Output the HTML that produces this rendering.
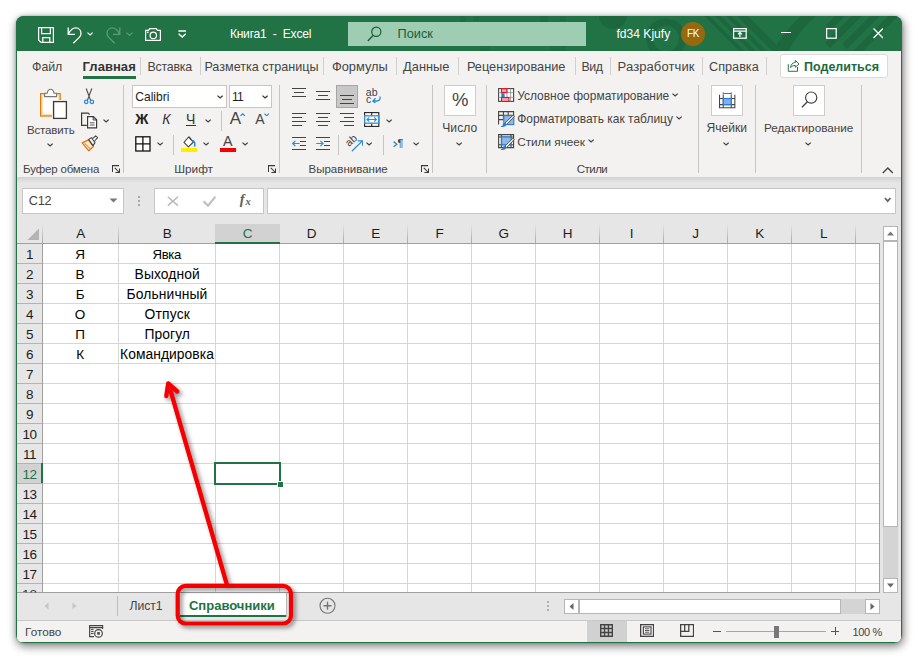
<!DOCTYPE html>
<html lang="ru"><head><meta charset="utf-8"><title>Excel</title>
<style>
html,body{margin:0;padding:0;background:#fff;}
body{width:918px;height:659px;overflow:hidden;position:relative;font-family:"Liberation Sans", sans-serif;}
#shadow{position:absolute;left:16px;top:16px;width:886px;height:627px;border-radius:8px;background:#217346;box-shadow:1px 3px 9px 1px rgba(0,0,0,0.45), 0 0 3px rgba(0,0,0,0.25);}
#win{position:absolute;left:0;top:0;width:918px;height:659px;clip-path:inset(16px 16px 16px 16px round 8px);}
#over{position:absolute;left:0;top:0;width:918px;height:659px;pointer-events:none;}
</style></head><body>
<div id="shadow"></div>
<div id="win">
<div style="position:absolute;left:16px;top:16px;width:886px;height:35px;background:#217346;"></div>
<div style="position:absolute;left:16px;top:51px;width:886px;height:126px;background:#f3f2f1;"></div>
<div style="position:absolute;left:16px;top:177px;width:886px;height:444px;background:#e6e6e6;"></div>
<div style="position:absolute;left:16px;top:177px;width:886px;height:6px;background:linear-gradient(#d2d2d2,#e6e6e6);"></div>
<div style="position:absolute;left:16px;top:621px;width:886px;height:22px;background:#f3f2f1;"></div>
<div style="position:absolute;left:16px;top:620px;width:886px;height:1px;background:#c8c8c8;"></div>
<div style="position:absolute;left:16px;top:51px;width:1px;height:592px;background:#217346;"></div>
<div style="position:absolute;left:901px;top:51px;width:1px;height:592px;background:#217346;"></div>
<div style="position:absolute;left:16px;top:642px;width:886px;height:1px;background:#217346;"></div>
<svg style="position:absolute;left:440px;top:16px;" width="462" height="35" viewBox="0 0 462 35"><g fill="#1d673e" stroke="none"><circle cx="173" cy="-1" r="14"/><path d="M226 22.5m-20 0a20 20 0 1 0 40 0a20 20 0 1 0 -40 0ZM226 22.5m-13 0a13 13 0 1 1 26 0a13 13 0 1 1 -26 0Z" fill-rule="evenodd"/><path d="M264 0L299 35H304.500L269.500 0ZM275 0L310 35H315.500L280.500 0ZM286 0L321 35H326.500L291.500 0ZM297 0L332 35H337.500L302.500 0ZM308 0L336 28V33.500L302.500 0Z"/><path d="M333 35C341 20 352 8 361 0H376C366 9 355 21 349 35Z"/><path d="M395 0L386 9L391 14L405 0ZM412 0L385 27L390 32L422 0ZM430 0L402 28L407 33L440 0ZM448 0L413 35H423L458 0Z"/><path d="M20 0h6v6h-6zM34 0h5v5h-5zM100 0h8v6h-8zM120 0h6v5h-6zM40 30h10v5h-10zM110 30h16v5h-16z" opacity="0.6"/></g></svg>
<div style="position:absolute;left:348px;top:22px;width:238px;height:24px;background:#9fcdb3;"></div>
<div style="position:absolute;left:681px;top:21.5px;width:24px;height:24px;background:#97690f;border-radius:50%;"></div>
<div style="position:absolute;left:83px;top:76px;width:52.5px;height:3px;background:#217346;"></div>
<div style="position:absolute;left:140px;top:57px;width:1px;height:18px;background:#d2d0ce;"></div>
<div style="position:absolute;left:200px;top:57px;width:1px;height:18px;background:#d2d0ce;"></div>
<div style="position:absolute;left:323px;top:57px;width:1px;height:18px;background:#d2d0ce;"></div>
<div style="position:absolute;left:396px;top:57px;width:1px;height:18px;background:#d2d0ce;"></div>
<div style="position:absolute;left:458px;top:57px;width:1px;height:18px;background:#d2d0ce;"></div>
<div style="position:absolute;left:575px;top:57px;width:1px;height:18px;background:#d2d0ce;"></div>
<div style="position:absolute;left:609.5px;top:57px;width:1px;height:18px;background:#d2d0ce;"></div>
<div style="position:absolute;left:702px;top:57px;width:1px;height:18px;background:#d2d0ce;"></div>
<div style="position:absolute;left:766px;top:57px;width:1px;height:18px;background:#d2d0ce;"></div>
<div style="position:absolute;left:780px;top:54px;width:108px;height:23.5px;background:#fff;border:1px solid #dddbd9;box-sizing:border-box;border-radius:3px;"></div>
<div style="position:absolute;left:123px;top:85px;width:1px;height:88px;background:#c8c6c4;"></div>
<div style="position:absolute;left:279px;top:85px;width:1px;height:88px;background:#c8c6c4;"></div>
<div style="position:absolute;left:432px;top:85px;width:1px;height:88px;background:#c8c6c4;"></div>
<div style="position:absolute;left:486px;top:85px;width:1px;height:88px;background:#c8c6c4;"></div>
<div style="position:absolute;left:698px;top:85px;width:1px;height:88px;background:#c8c6c4;"></div>
<div style="position:absolute;left:755px;top:85px;width:1px;height:88px;background:#c8c6c4;"></div>
<div style="position:absolute;left:861px;top:85px;width:1px;height:88px;background:#c8c6c4;"></div>
<div style="position:absolute;left:132px;top:85px;width:95px;height:23px;background:#fff;border:1px solid #c8c6c4;box-sizing:border-box;"></div>
<div style="position:absolute;left:229px;top:85px;width:43px;height:23px;background:#fff;border:1px solid #c8c6c4;box-sizing:border-box;"></div>
<div style="position:absolute;left:186px;top:125px;width:10px;height:1px;background:#333;"></div>
<div style="position:absolute;left:221px;top:110.5px;width:1px;height:20px;background:#c8c6c4;"></div>
<div style="position:absolute;left:173px;top:134.5px;width:1px;height:20px;background:#c8c6c4;"></div>
<div style="position:absolute;left:338px;top:134.5px;width:1px;height:20px;background:#c8c6c4;"></div>
<div style="position:absolute;left:383px;top:134.5px;width:1px;height:20px;background:#c8c6c4;"></div>
<div style="position:absolute;left:336px;top:85px;width:22px;height:23px;background:#c8c8c8;border:1px solid #a6a6a6;box-sizing:border-box;"></div>
<div style="position:absolute;left:444px;top:85px;width:32px;height:31px;background:#fff;border:1px solid #cfcdcb;box-sizing:border-box;"></div>
<div style="position:absolute;left:711px;top:85px;width:32px;height:31px;background:#fff;border:1px solid #cfcdcb;box-sizing:border-box;"></div>
<div style="position:absolute;left:793px;top:85px;width:32px;height:31px;background:#fff;border:1px solid #cfcdcb;box-sizing:border-box;"></div>
<div style="position:absolute;left:22px;top:188px;width:102px;height:26px;background:#fff;border:1px solid #c6c6c6;box-sizing:border-box;"></div>
<div style="position:absolute;left:154px;top:188px;width:110px;height:26px;background:#fff;border:1px solid #c6c6c6;box-sizing:border-box;"></div>
<div style="position:absolute;left:267px;top:188px;width:629px;height:26px;background:#fff;border:1px solid #c6c6c6;box-sizing:border-box;"></div>
<div style="position:absolute;left:138px;top:196px;width:2px;height:2px;background:#a8a8a8;"></div>
<div style="position:absolute;left:138px;top:200px;width:2px;height:2px;background:#a8a8a8;"></div>
<div style="position:absolute;left:138px;top:204px;width:2px;height:2px;background:#a8a8a8;"></div>
<div style="position:absolute;left:43px;top:244px;width:836px;height:348px;background:#fff;"></div>
<div style="position:absolute;left:17px;top:463px;width:25px;height:20px;background:#d2d2d2;"></div>
<div style="position:absolute;left:17px;top:263px;width:25px;height:1px;background:#b4b4b4;"></div>
<div style="position:absolute;left:43px;top:263px;width:836px;height:1px;background:#d6d6d6;"></div>
<div style="position:absolute;left:17px;top:283px;width:25px;height:1px;background:#b4b4b4;"></div>
<div style="position:absolute;left:43px;top:283px;width:836px;height:1px;background:#d6d6d6;"></div>
<div style="position:absolute;left:17px;top:303px;width:25px;height:1px;background:#b4b4b4;"></div>
<div style="position:absolute;left:43px;top:303px;width:836px;height:1px;background:#d6d6d6;"></div>
<div style="position:absolute;left:17px;top:323px;width:25px;height:1px;background:#b4b4b4;"></div>
<div style="position:absolute;left:43px;top:323px;width:836px;height:1px;background:#d6d6d6;"></div>
<div style="position:absolute;left:17px;top:343px;width:25px;height:1px;background:#b4b4b4;"></div>
<div style="position:absolute;left:43px;top:343px;width:836px;height:1px;background:#d6d6d6;"></div>
<div style="position:absolute;left:17px;top:363px;width:25px;height:1px;background:#b4b4b4;"></div>
<div style="position:absolute;left:43px;top:363px;width:836px;height:1px;background:#d6d6d6;"></div>
<div style="position:absolute;left:17px;top:383px;width:25px;height:1px;background:#b4b4b4;"></div>
<div style="position:absolute;left:43px;top:383px;width:836px;height:1px;background:#d6d6d6;"></div>
<div style="position:absolute;left:17px;top:403px;width:25px;height:1px;background:#b4b4b4;"></div>
<div style="position:absolute;left:43px;top:403px;width:836px;height:1px;background:#d6d6d6;"></div>
<div style="position:absolute;left:17px;top:423px;width:25px;height:1px;background:#b4b4b4;"></div>
<div style="position:absolute;left:43px;top:423px;width:836px;height:1px;background:#d6d6d6;"></div>
<div style="position:absolute;left:17px;top:443px;width:25px;height:1px;background:#b4b4b4;"></div>
<div style="position:absolute;left:43px;top:443px;width:836px;height:1px;background:#d6d6d6;"></div>
<div style="position:absolute;left:17px;top:463px;width:25px;height:1px;background:#b4b4b4;"></div>
<div style="position:absolute;left:43px;top:463px;width:836px;height:1px;background:#d6d6d6;"></div>
<div style="position:absolute;left:17px;top:483px;width:25px;height:1px;background:#b4b4b4;"></div>
<div style="position:absolute;left:43px;top:483px;width:836px;height:1px;background:#d6d6d6;"></div>
<div style="position:absolute;left:17px;top:503px;width:25px;height:1px;background:#b4b4b4;"></div>
<div style="position:absolute;left:43px;top:503px;width:836px;height:1px;background:#d6d6d6;"></div>
<div style="position:absolute;left:17px;top:523px;width:25px;height:1px;background:#b4b4b4;"></div>
<div style="position:absolute;left:43px;top:523px;width:836px;height:1px;background:#d6d6d6;"></div>
<div style="position:absolute;left:17px;top:543px;width:25px;height:1px;background:#b4b4b4;"></div>
<div style="position:absolute;left:43px;top:543px;width:836px;height:1px;background:#d6d6d6;"></div>
<div style="position:absolute;left:17px;top:563px;width:25px;height:1px;background:#b4b4b4;"></div>
<div style="position:absolute;left:43px;top:563px;width:836px;height:1px;background:#d6d6d6;"></div>
<div style="position:absolute;left:17px;top:583px;width:25px;height:1px;background:#b4b4b4;"></div>
<div style="position:absolute;left:43px;top:583px;width:836px;height:1px;background:#d6d6d6;"></div>
<div style="position:absolute;left:118px;top:244px;width:1px;height:348px;background:#d6d6d6;"></div>
<div style="position:absolute;left:118px;top:224px;width:1px;height:19px;background:linear-gradient(#e6e6e6,#a8a8a8);"></div>
<div style="position:absolute;left:215px;top:244px;width:1px;height:348px;background:#d6d6d6;"></div>
<div style="position:absolute;left:215px;top:224px;width:1px;height:19px;background:linear-gradient(#e6e6e6,#a8a8a8);"></div>
<div style="position:absolute;left:279px;top:244px;width:1px;height:348px;background:#d6d6d6;"></div>
<div style="position:absolute;left:279px;top:224px;width:1px;height:19px;background:linear-gradient(#e6e6e6,#a8a8a8);"></div>
<div style="position:absolute;left:343px;top:244px;width:1px;height:348px;background:#d6d6d6;"></div>
<div style="position:absolute;left:343px;top:224px;width:1px;height:19px;background:linear-gradient(#e6e6e6,#a8a8a8);"></div>
<div style="position:absolute;left:407px;top:244px;width:1px;height:348px;background:#d6d6d6;"></div>
<div style="position:absolute;left:407px;top:224px;width:1px;height:19px;background:linear-gradient(#e6e6e6,#a8a8a8);"></div>
<div style="position:absolute;left:471px;top:244px;width:1px;height:348px;background:#d6d6d6;"></div>
<div style="position:absolute;left:471px;top:224px;width:1px;height:19px;background:linear-gradient(#e6e6e6,#a8a8a8);"></div>
<div style="position:absolute;left:535px;top:244px;width:1px;height:348px;background:#d6d6d6;"></div>
<div style="position:absolute;left:535px;top:224px;width:1px;height:19px;background:linear-gradient(#e6e6e6,#a8a8a8);"></div>
<div style="position:absolute;left:599px;top:244px;width:1px;height:348px;background:#d6d6d6;"></div>
<div style="position:absolute;left:599px;top:224px;width:1px;height:19px;background:linear-gradient(#e6e6e6,#a8a8a8);"></div>
<div style="position:absolute;left:663px;top:244px;width:1px;height:348px;background:#d6d6d6;"></div>
<div style="position:absolute;left:663px;top:224px;width:1px;height:19px;background:linear-gradient(#e6e6e6,#a8a8a8);"></div>
<div style="position:absolute;left:727px;top:244px;width:1px;height:348px;background:#d6d6d6;"></div>
<div style="position:absolute;left:727px;top:224px;width:1px;height:19px;background:linear-gradient(#e6e6e6,#a8a8a8);"></div>
<div style="position:absolute;left:791px;top:244px;width:1px;height:348px;background:#d6d6d6;"></div>
<div style="position:absolute;left:791px;top:224px;width:1px;height:19px;background:linear-gradient(#e6e6e6,#a8a8a8);"></div>
<div style="position:absolute;left:855px;top:244px;width:1px;height:348px;background:#d6d6d6;"></div>
<div style="position:absolute;left:855px;top:224px;width:1px;height:19px;background:linear-gradient(#e6e6e6,#a8a8a8);"></div>
<div style="position:absolute;left:42px;top:224px;width:1px;height:19px;background:linear-gradient(#e6e6e6,#a8a8a8);"></div>
<div style="position:absolute;left:17px;top:243px;width:863px;height:1px;background:#a0a0a0;"></div>
<div style="position:absolute;left:42px;top:244px;width:1px;height:348px;background:#a0a0a0;"></div>
<div style="position:absolute;left:879px;top:244px;width:1px;height:349px;background:#a0a0a0;"></div>
<div style="position:absolute;left:17px;top:592px;width:863px;height:1px;background:#a0a0a0;"></div>
<div style="position:absolute;left:215px;top:224px;width:65px;height:19px;background:#d2d2d2;"></div>
<div style="position:absolute;left:215px;top:242px;width:65px;height:2px;background:#217346;"></div>
<div style="position:absolute;left:41px;top:463px;width:2px;height:20px;background:#217346;"></div>
<svg style="position:absolute;left:27px;top:228px;" width="13" height="13" viewBox="0 0 13 13"><path d="M12 0.5V12H0.5Z" fill="#b4b4b4"/></svg>
<div style="position:absolute;left:214px;top:462px;width:67px;height:23px;border:2px solid #217346;box-sizing:border-box;"></div>
<div style="position:absolute;left:277px;top:481px;width:7px;height:7px;background:#fff;"></div>
<div style="position:absolute;left:278px;top:482px;width:5px;height:5px;background:#217346;"></div>
<div style="position:absolute;left:883px;top:226px;width:15px;height:367px;background:#d4d4d4;"></div>
<div style="position:absolute;left:883px;top:226px;width:15px;height:15px;background:#fff;border:1px solid #b6b6b6;box-sizing:border-box;"></div>
<div style="position:absolute;left:883px;top:241px;width:15px;height:286px;background:#fff;border:1px solid #b6b6b6;box-sizing:border-box;"></div>
<div style="position:absolute;left:883px;top:578px;width:15px;height:15px;background:#fff;border:1px solid #b6b6b6;box-sizing:border-box;"></div>
<svg style="position:absolute;left:887px;top:231px;" width="7" height="5" viewBox="0 0 7 5"><path d="M3.5 0.5L7 4.5H0Z" fill="#777"/></svg>
<svg style="position:absolute;left:887px;top:583px;" width="7" height="5" viewBox="0 0 7 5"><path d="M3.5 4.5L7 0.5H0Z" fill="#666"/></svg>
<div style="position:absolute;left:564px;top:599px;width:316px;height:15px;background:#d4d4d4;"></div>
<div style="position:absolute;left:564px;top:599px;width:15px;height:15px;background:#fff;border:1px solid #b6b6b6;box-sizing:border-box;"></div>
<div style="position:absolute;left:579px;top:599px;width:262px;height:15px;background:#fff;border:1px solid #b6b6b6;box-sizing:border-box;"></div>
<div style="position:absolute;left:865px;top:599px;width:15px;height:15px;background:#fff;border:1px solid #b6b6b6;box-sizing:border-box;"></div>
<svg style="position:absolute;left:569px;top:603px;" width="5" height="7" viewBox="0 0 5 7"><path d="M0.5 3.5L4.5 0V7Z" fill="#666"/></svg>
<svg style="position:absolute;left:870px;top:603px;" width="5" height="7" viewBox="0 0 5 7"><path d="M4.5 3.5L0.5 0V7Z" fill="#666"/></svg>
<div style="position:absolute;left:547px;top:601px;width:2px;height:2px;background:#b0b0b0;"></div>
<div style="position:absolute;left:547px;top:605px;width:2px;height:2px;background:#b0b0b0;"></div>
<div style="position:absolute;left:547px;top:609px;width:2px;height:2px;background:#b0b0b0;"></div>
<div style="position:absolute;left:117px;top:596px;width:1px;height:20px;background:#bdbdbd;"></div>
<div style="position:absolute;left:180px;top:593px;width:107px;height:24px;background:#fff;"></div>
<div style="position:absolute;left:286px;top:593px;width:1px;height:24px;background:#b8b8b8;"></div>
<div style="position:absolute;left:180px;top:615px;width:106px;height:2px;background:#217346;"></div>
<svg style="position:absolute;left:44px;top:602px;" width="5" height="8" viewBox="0 0 5 8"><path d="M4.5 0.5V7.5L0.5 4Z" fill="#c6c6c6"/></svg>
<svg style="position:absolute;left:72px;top:602px;" width="5" height="8" viewBox="0 0 5 8"><path d="M0.5 0.5V7.5L4.5 4Z" fill="#c6c6c6"/></svg>
<svg style="position:absolute;left:319px;top:597px;" width="18" height="18" viewBox="0 0 18 18"><circle cx="8.5" cy="8.8" r="7.5" fill="none" stroke="#767676" stroke-width="1.1"/><path d="M4.5 8.8H12.5M8.5 4.8V12.8" stroke="#767676" stroke-width="1.4"/></svg>
<div style="position:absolute;left:587px;top:621px;width:40px;height:21px;background:#d1d1d1;"></div>
<div style="position:absolute;left:726px;top:631px;width:100px;height:1px;background:#a6a6a6;"></div>
<div style="position:absolute;left:774px;top:625.5px;width:5px;height:12px;background:#777;"></div>
<div style="position:absolute;left:713px;top:630.5px;width:8px;height:1.3px;background:#555;"></div>
<div style="position:absolute;left:831px;top:630.5px;width:8px;height:1.1px;background:#555;"></div>
<div style="position:absolute;left:834.5px;top:627px;width:1.1px;height:8px;background:#555;"></div>
<svg style="position:absolute;left:38px;top:27px;" width="16" height="16" viewBox="0 0 16 16"><path d="M0.6 0.6H15.4V15.4H3L0.6 13Z" stroke="#fff" fill="none" stroke-width="1.25"/><path d="M3.6 0.6V6.6H12.4V0.6M4.8 15.4V10.6H11.8V15.4" stroke="#fff" fill="none" stroke-width="1.25"/></svg>
<svg style="position:absolute;left:67.2px;top:26.5px;" width="15" height="17" viewBox="0 0 15 17"><g stroke="#fff" fill="none" stroke-width="1.3"><path d="M1.2 0.5V7.3H8"/><path d="M1.4 7.1C3.2 3.2 6 0.9 8.8 0.9C12 0.9 14 3.5 14 6.4C14 8.3 13.2 9.4 12 10.6L6.3 16.2"/></g></svg>
<svg style="position:absolute;left:106.3px;top:26.5px;" width="15" height="17" viewBox="0 0 15 17"><g transform="translate(15,0) scale(-1,1)" stroke="#5c9c7b" fill="none" stroke-width="1.3"><path d="M1.2 0.5V7.3H8"/><path d="M1.4 7.1C3.2 3.2 6 0.9 8.8 0.9C12 0.9 14 3.5 14 6.4C14 8.3 13.2 9.4 12 10.6L6.3 16.2"/></g></svg>
<svg style="position:absolute;left:87.4px;top:31.6px;" width="6.2" height="4.1" viewBox="0 0 6.2 4.1"><path d="M0.5 0.6L3.1 3.0L5.7 0.6" stroke="#fff" fill="none" stroke-width="1.25"/></svg>
<svg style="position:absolute;left:126.4px;top:31.6px;" width="7" height="4.5" viewBox="0 0 7 4.5"><path d="M0.5 0.6L3.5 3.4L6.5 0.6" stroke="#5c9c7b" fill="none" stroke-width="1.1"/></svg>
<svg style="position:absolute;left:145px;top:28px;" width="16" height="13" viewBox="0 0 16 13"><path d="M0.6 2.4H3.5L4.8 0.7H11.2L12.5 2.4H15.4V12.4H0.6Z" stroke="#fff" fill="none" stroke-width="1.25"/><circle cx="8.3" cy="7.4" r="3.2" stroke="#fff" fill="none" stroke-width="1.25" stroke-width="1.4"/><rect x="2" y="3.6" width="1.6" height="1.4" fill="#fff"/></svg>
<svg style="position:absolute;left:177.5px;top:30px;" width="8.5" height="8" viewBox="0 0 8.5 8"><path d="M0.4 1H8" stroke="#fff" stroke-width="1.3"/><path d="M0.6 3.8L4.2 7L7.8 3.8" stroke="#fff" fill="none" stroke-width="1.4"/></svg>
<svg style="position:absolute;left:367px;top:26px;" width="15" height="16" viewBox="0 0 15 16"><circle cx="9.3" cy="5.8" r="4.6" stroke="#185c37" fill="none" stroke-width="1.2"/><path d="M6.2 9.2L0.8 15" stroke="#185c37" stroke-width="1.3"/></svg>
<svg style="position:absolute;left:733px;top:28px;" width="14" height="11" viewBox="0 0 14 11"><rect x="0.6" y="0.6" width="12.6" height="9.6" stroke="#fff" fill="none" stroke-width="1.25" stroke-width="1.1"/><path d="M0.6 3H13.2" stroke="#fff" fill="none" stroke-width="1.25" stroke-width="1.1"/><path d="M6.9 9V4.6M4.9 6.4L6.9 4.4L8.9 6.4" stroke="#fff" fill="none" stroke-width="1.25" stroke-width="1.1"/></svg>
<div style="position:absolute;left:781px;top:32.3px;width:10px;height:1.2px;background:#fff;"></div>
<svg style="position:absolute;left:826px;top:27.5px;" width="11" height="11" viewBox="0 0 11 11"><rect x="0.6" y="0.6" width="9.6" height="9.6" stroke="#fff" fill="none" stroke-width="1.25" stroke-width="1.2"/></svg>
<svg style="position:absolute;left:872.5px;top:28px;" width="10.5" height="10.5" viewBox="0 0 10.5 10.5"><path d="M0.5 0.5L10 10M10 0.5L0.5 10" stroke="#fff" fill="none" stroke-width="1.25" stroke-width="1.2"/></svg>
<svg style="position:absolute;left:787px;top:59px;" width="13" height="13" viewBox="0 0 13 13"><g stroke="#1e6e42" fill="none" stroke-width="0.95" stroke-linejoin="round"><path d="M1.3 5.2V12.3H10.5V8"/><path d="M3.6 8.6C3.8 5.6 5.5 3.6 8.3 3.4V1.3L12 5L8.3 8.3V6.4C6.2 6.4 4.8 7.1 3.6 8.6Z"/></g></svg>
<svg style="position:absolute;left:39px;top:88px;" width="29" height="32" viewBox="0 0 29 32"><rect x="1.6" y="5.6" width="19.6" height="22.4" fill="#fbe0b4" stroke="#e0790c" stroke-width="1.2"/><rect x="4" y="8" width="15" height="18" fill="#fdfdfd"/><path d="M5.6 8.6V5.3H8.2C8.6 2.6 10 1.2 11.6 1.2C13.2 1.2 14.6 2.6 15 5.3H17.6V8.6Z" fill="#fafafa" stroke="#787878" stroke-width="1.1"/><rect x="13" y="12" width="16" height="20" fill="#f3f2f1"/><rect x="14.6" y="13.6" width="12.8" height="16.8" fill="#fff" stroke="#3a3a3a" stroke-width="1.3"/></svg>
<svg style="position:absolute;left:46.9px;top:143.4px;" width="6.2" height="4.1" viewBox="0 0 6.2 4.1"><path d="M0.5 0.6L3.1 3.0L5.7 0.6" stroke="#444" fill="none" stroke-width="1.25"/></svg>
<svg style="position:absolute;left:83px;top:88px;" width="12" height="17" viewBox="0 0 12 17"><path d="M3.2 0.5L7.6 12.4M8.8 0.5L4.4 12.4" stroke="#555" stroke-width="1.2" fill="none"/><circle cx="3.2" cy="13.9" r="1.7" fill="none" stroke="#2b8fd6" stroke-width="1.3"/><circle cx="8.9" cy="13.9" r="1.7" fill="none" stroke="#2b8fd6" stroke-width="1.3"/></svg>
<svg style="position:absolute;left:80px;top:111.5px;" width="18" height="17" viewBox="0 0 18 17"><path d="M6.8 13.4H1.6V1.2H8.2L9.6 2.6" fill="none" stroke="#3a3a3a" stroke-width="1.2"/><path d="M7.6 4.6H13.4L16.6 7.8V15.8H7.6Z" fill="#fff" stroke="#3a3a3a" stroke-width="1.2"/><path d="M13.2 4.8V8H16.4" fill="none" stroke="#3a3a3a" stroke-width="1"/><path d="M9.8 10.8H14.6M9.8 13H14.6" stroke="#555" stroke-width="1"/></svg>
<svg style="position:absolute;left:103.0px;top:118.6px;" width="6.2" height="4.1" viewBox="0 0 6.2 4.1"><path d="M0.5 0.6L3.1 3.0L5.7 0.6" stroke="#444" fill="none" stroke-width="1.25"/></svg>
<svg style="position:absolute;left:80.5px;top:135px;" width="18" height="17" viewBox="0 0 18 17"><path d="M1.2 7.8L7.4 4.8L12.4 11.6L7.8 15.8Z" fill="#fde9cc" stroke="#e0790c" stroke-width="1.3" stroke-linejoin="round"/><path d="M3.5 8.2L9 13.5" stroke="#e0790c" stroke-width="1"/><path d="M7.6 4.4L10.6 2.6L14 7.6L12 10.6Z" fill="#f3f2f1" stroke="#444" stroke-width="1.1" stroke-linejoin="round"/><path d="M11.6 3.6L14.6 0.9L16.6 2.6L13.6 6" fill="#f3f2f1" stroke="#444" stroke-width="1.1" stroke-linejoin="round"/></svg>
<svg style="position:absolute;left:111.6px;top:164.5px;" width="9" height="9" viewBox="0 0 9 9"><path d="M0.5 7V0.6H7M2.8 2.9L7.4 7.5M7.5 3.4V7.5H3.4" fill="none" stroke="#3a3a3a" stroke-width="1.05"/></svg>
<svg style="position:absolute;left:267.6px;top:164.5px;" width="9" height="9" viewBox="0 0 9 9"><path d="M0.5 7V0.6H7M2.8 2.9L7.4 7.5M7.5 3.4V7.5H3.4" fill="none" stroke="#3a3a3a" stroke-width="1.05"/></svg>
<svg style="position:absolute;left:420.8px;top:164.5px;" width="9" height="9" viewBox="0 0 9 9"><path d="M0.5 7V0.6H7M2.8 2.9L7.4 7.5M7.5 3.4V7.5H3.4" fill="none" stroke="#3a3a3a" stroke-width="1.05"/></svg>
<svg style="position:absolute;left:216.8px;top:95.19999999999999px;" width="6.2" height="4.1" viewBox="0 0 6.2 4.1"><path d="M0.5 0.6L3.1 3.0L5.7 0.6" stroke="#333" fill="none" stroke-width="1.25"/></svg>
<svg style="position:absolute;left:261.59999999999997px;top:95.19999999999999px;" width="6.2" height="4.1" viewBox="0 0 6.2 4.1"><path d="M0.5 0.6L3.1 3.0L5.7 0.6" stroke="#333" fill="none" stroke-width="1.25"/></svg>
<svg style="position:absolute;left:204.8px;top:118.8px;" width="6.2" height="4.1" viewBox="0 0 6.2 4.1"><path d="M0.5 0.6L3.1 3.0L5.7 0.6" stroke="#444" fill="none" stroke-width="1.25"/></svg>
<svg style="position:absolute;left:156.70000000000002px;top:142.29999999999998px;" width="6.2" height="4.1" viewBox="0 0 6.2 4.1"><path d="M0.5 0.6L3.1 3.0L5.7 0.6" stroke="#444" fill="none" stroke-width="1.25"/></svg>
<svg style="position:absolute;left:202.8px;top:142.29999999999998px;" width="6.2" height="4.1" viewBox="0 0 6.2 4.1"><path d="M0.5 0.6L3.1 3.0L5.7 0.6" stroke="#444" fill="none" stroke-width="1.25"/></svg>
<svg style="position:absolute;left:241.6px;top:142.29999999999998px;" width="6.2" height="4.1" viewBox="0 0 6.2 4.1"><path d="M0.5 0.6L3.1 3.0L5.7 0.6" stroke="#444" fill="none" stroke-width="1.25"/></svg>
<svg style="position:absolute;left:240.4px;top:112.8px;" width="5.5" height="3.6" viewBox="0 0 5.5 3.6"><path d="M0.5 3L2.7 0.8L4.9 3" stroke="#2b8fd6" fill="none" stroke-width="1.2"/></svg>
<svg style="position:absolute;left:264px;top:112.8px;" width="5.5" height="3.6" viewBox="0 0 5.5 3.6"><path d="M0.5 0.7L2.7 2.9L4.9 0.7" stroke="#2b8fd6" fill="none" stroke-width="1.2"/></svg>
<svg style="position:absolute;left:134.5px;top:135.5px;" width="16" height="16" viewBox="0 0 16 16"><rect x="0.8" y="0.8" width="14.2" height="14.2" fill="#fff" stroke="#111" stroke-width="1.3"/><path d="M7.9 0.8V15M0.8 7.9H15" stroke="#111" stroke-width="1.3"/></svg>
<div style="position:absolute;left:181px;top:148px;width:16px;height:4px;background:#ffee00;"></div>
<svg style="position:absolute;left:183px;top:135.5px;" width="14" height="12.5" viewBox="0 0 14 12.5"><path d="M5.6 1L10.4 6L5.4 10.8L1 6.4Z" fill="#fff" stroke="#444" stroke-width="1.1" stroke-linejoin="round"/><path d="M5.8 0.8C7.4 1.2 8 2.6 7.4 3.8" fill="none" stroke="#444" stroke-width="1"/><path d="M9.4 4.6C11.4 5 12.4 7.4 11.6 10.6" fill="none" stroke="#2b8fd6" stroke-width="1.6"/></svg>
<div style="position:absolute;left:220px;top:148px;width:16px;height:4px;background:#f40000;"></div>
<div style="position:absolute;left:292px;top:88.1px;width:14px;height:1.1px;background:#444;"></div>
<div style="position:absolute;left:294.2px;top:92.1px;width:9.8px;height:1.1px;background:#444;"></div>
<div style="position:absolute;left:292px;top:96.1px;width:14px;height:1.1px;background:#444;"></div>
<div style="position:absolute;left:316px;top:90.9px;width:14px;height:1.1px;background:#444;"></div>
<div style="position:absolute;left:318.2px;top:94.9px;width:9.8px;height:1.1px;background:#444;"></div>
<div style="position:absolute;left:316px;top:99.0px;width:14px;height:1.1px;background:#444;"></div>
<div style="position:absolute;left:340px;top:94.9px;width:14px;height:1.1px;background:#444;"></div>
<div style="position:absolute;left:342.4px;top:99.0px;width:9.4px;height:1.1px;background:#444;"></div>
<div style="position:absolute;left:340px;top:103.1px;width:14px;height:1.1px;background:#444;"></div>
<div style="position:absolute;left:292px;top:112.9px;width:14px;height:1.1px;background:#444;"></div>
<div style="position:absolute;left:292px;top:117.0px;width:10.3px;height:1.1px;background:#444;"></div>
<div style="position:absolute;left:292px;top:121.1px;width:14px;height:1.1px;background:#444;"></div>
<div style="position:absolute;left:292px;top:124.9px;width:10.3px;height:1.1px;background:#444;"></div>
<div style="position:absolute;left:316px;top:112.9px;width:14px;height:1.1px;background:#444;"></div>
<div style="position:absolute;left:318.2px;top:117.0px;width:9.8px;height:1.1px;background:#444;"></div>
<div style="position:absolute;left:316px;top:121.1px;width:14px;height:1.1px;background:#444;"></div>
<div style="position:absolute;left:318.2px;top:124.9px;width:9.8px;height:1.1px;background:#444;"></div>
<div style="position:absolute;left:340px;top:112.9px;width:14px;height:1.1px;background:#444;"></div>
<div style="position:absolute;left:344px;top:117.0px;width:10px;height:1.1px;background:#444;"></div>
<div style="position:absolute;left:340px;top:121.1px;width:14px;height:1.1px;background:#444;"></div>
<div style="position:absolute;left:344px;top:124.9px;width:10px;height:1.1px;background:#444;"></div>
<div style="position:absolute;left:292px;top:136.9px;width:14px;height:1.1px;background:#444;"></div>
<div style="position:absolute;left:300.2px;top:140.9px;width:5.800000000000001px;height:1.1px;background:#444;"></div>
<div style="position:absolute;left:300.2px;top:145.0px;width:5.800000000000001px;height:1.1px;background:#444;"></div>
<div style="position:absolute;left:292px;top:149.1px;width:14px;height:1.1px;background:#444;"></div>
<div style="position:absolute;left:316px;top:136.9px;width:14px;height:1.1px;background:#444;"></div>
<div style="position:absolute;left:324.4px;top:140.9px;width:5.6px;height:1.1px;background:#444;"></div>
<div style="position:absolute;left:324.4px;top:145.0px;width:5.6px;height:1.1px;background:#444;"></div>
<div style="position:absolute;left:316px;top:149.1px;width:14px;height:1.1px;background:#444;"></div>
<svg style="position:absolute;left:291.5px;top:140px;" width="8" height="7" viewBox="0 0 8 7"><path d="M0.8 3.5H7.6M3.4 0.8L0.7 3.5L3.4 6.2" stroke="#2b8fd6" fill="none" stroke-width="1.2"/></svg>
<svg style="position:absolute;left:315.5px;top:140px;" width="8" height="7" viewBox="0 0 8 7"><path d="M0.2 3.5H7M4.4 0.8L7.1 3.5L4.4 6.2" stroke="#2b8fd6" fill="none" stroke-width="1.2"/></svg>
<svg style="position:absolute;left:371.5px;top:95.5px;" width="9" height="7.5" viewBox="0 0 9 7.5"><path d="M7.8 0.5C8.6 3 7.6 5 4.6 5H1M3.6 2.2L0.8 5L3.6 7.2" stroke="#2b8fd6" fill="none" stroke-width="1.3"/></svg>
<svg style="position:absolute;left:364px;top:112px;" width="15.5" height="15" viewBox="0 0 15.5 15"><rect x="0.6" y="0.6" width="14.2" height="13.8" fill="#fff" stroke="#222" stroke-width="1.1"/><path d="M7.7 0.6V3.8M7.7 11.2V14.4" stroke="#222" stroke-width="1.1"/><rect x="0.7" y="3.8" width="14" height="7.4" fill="#fff" stroke="#2b8fd6" stroke-width="1.3"/><path d="M3 7.5H12.4M5.2 5.4L3 7.5L5.2 9.6M10.2 5.4L12.4 7.5L10.2 9.6" fill="none" stroke="#2b8fd6" stroke-width="1.2"/></svg>
<svg style="position:absolute;left:385.79999999999995px;top:118.6px;" width="6.2" height="4.1" viewBox="0 0 6.2 4.1"><path d="M0.5 0.6L3.1 3.0L5.7 0.6" stroke="#444" fill="none" stroke-width="1.25"/></svg>
<svg style="position:absolute;left:340px;top:130px;" width="24" height="24" viewBox="0 0 24 24"><text transform="translate(9.1,17) rotate(-42)" font-size="10.5" font-family="Liberation Sans, sans-serif" fill="#444">ab</text></svg>
<svg style="position:absolute;left:350.5px;top:139.5px;" width="12.5" height="12" viewBox="0 0 12.5 12"><path d="M0.8 11.2L11.4 0.9M6.6 0.8H11.6V5.8" stroke="#2b8fd6" fill="none" stroke-width="1.3"/></svg>
<svg style="position:absolute;left:366.0px;top:142.4px;" width="6.2" height="4.1" viewBox="0 0 6.2 4.1"><path d="M0.5 0.6L3.1 3.0L5.7 0.6" stroke="#444" fill="none" stroke-width="1.25"/></svg>
<svg style="position:absolute;left:392.8px;top:140.8px;" width="5" height="6.5" viewBox="0 0 5 6.5"><path d="M0.6 0.6L3.8 3.2L0.6 5.8" stroke="#2b8fd6" fill="none" stroke-width="1.4"/></svg>
<svg style="position:absolute;left:412.9px;top:142.4px;" width="6.2" height="4.1" viewBox="0 0 6.2 4.1"><path d="M0.5 0.6L3.1 3.0L5.7 0.6" stroke="#444" fill="none" stroke-width="1.25"/></svg>
<svg style="position:absolute;left:456.2px;top:141.5px;" width="6.2" height="4.1" viewBox="0 0 6.2 4.1"><path d="M0.5 0.6L3.1 3.0L5.7 0.6" stroke="#444" fill="none" stroke-width="1.25"/></svg>
<svg style="position:absolute;left:722.9px;top:141.5px;" width="6.2" height="4.1" viewBox="0 0 6.2 4.1"><path d="M0.5 0.6L3.1 3.0L5.7 0.6" stroke="#444" fill="none" stroke-width="1.25"/></svg>
<svg style="position:absolute;left:805.0px;top:141.5px;" width="6.2" height="4.1" viewBox="0 0 6.2 4.1"><path d="M0.5 0.6L3.1 3.0L5.7 0.6" stroke="#444" fill="none" stroke-width="1.25"/></svg>
<svg style="position:absolute;left:672.1999999999999px;top:93.39999999999999px;" width="6.2" height="4.1" viewBox="0 0 6.2 4.1"><path d="M0.5 0.6L3.1 3.0L5.7 0.6" stroke="#444" fill="none" stroke-width="1.25"/></svg>
<svg style="position:absolute;left:676.4px;top:116.39999999999999px;" width="6.2" height="4.1" viewBox="0 0 6.2 4.1"><path d="M0.5 0.6L3.1 3.0L5.7 0.6" stroke="#444" fill="none" stroke-width="1.25"/></svg>
<svg style="position:absolute;left:588.4px;top:139.4px;" width="6.2" height="4.1" viewBox="0 0 6.2 4.1"><path d="M0.5 0.6L3.1 3.0L5.7 0.6" stroke="#444" fill="none" stroke-width="1.25"/></svg>
<svg style="position:absolute;left:498px;top:88px;" width="16.5" height="14" viewBox="0 0 16.5 14"><rect x="0.6" y="0.6" width="15" height="12.8" fill="#fff" stroke="#444" stroke-width="1.1"/><path d="M0.6 4.6H15.6M0.6 9.4H15.6M3.4 0.6V13.4M9 0.6V13.4M12.6 0.6V13.4" stroke="#8a8a8a" stroke-width="0.8"/><rect x="3.5" y="0.7" width="5.4" height="3.9" fill="#f7a1aa" stroke="#e81123" stroke-width="1.1"/><rect x="3.5" y="9.5" width="7.4" height="3.9" fill="#f7a1aa" stroke="#e81123" stroke-width="1.1"/><rect x="3.8" y="5.2" width="2.8" height="3.8" fill="#2b7cd3"/></svg>
<svg style="position:absolute;left:498px;top:111px;" width="17" height="16" viewBox="0 0 17 16"><path d="M0.6 13.4V0.6H15.6V4.4M0.6 4.4H15.6M5.4 0.6V8M10.2 0.6V4.4M0.6 8.6H5.4" fill="none" stroke="#444" stroke-width="1.1"/><rect x="5.8" y="4.6" width="10" height="9" fill="#8ab9ec" stroke="#2b7cd3" stroke-width="1.1"/><g transform="translate(2.2,3.6)"><path d="M12.8 0.6L4.8 8.4L6.4 10L14 2Z" fill="#f3f2f1" stroke="#555" stroke-width="1"/><path d="M4.9 8.2C3.4 8.4 2.6 9.4 2.4 10.6C2.2 11.4 1.4 11.8 0.4 11.8C2.4 12.8 5.4 12.4 6.6 9.9Z" fill="#2b7cd3"/></g></svg>
<svg style="position:absolute;left:498px;top:134px;" width="17" height="16" viewBox="0 0 17 16"><path d="M0.6 0.6H15.6V13.6H0.6ZM0.6 3H15.6M3.4 0.6V13.6M0.6 10.8H15.6M13 0.6V13.6" fill="none" stroke="#444" stroke-width="1.1"/><rect x="3.6" y="3" width="9.4" height="7.8" fill="#8ab9ec" stroke="#2b7cd3" stroke-width="1.1"/><g transform="translate(2.2,3.6)"><path d="M12.8 0.6L4.8 8.4L6.4 10L14 2Z" fill="#f3f2f1" stroke="#555" stroke-width="1"/><path d="M4.9 8.2C3.4 8.4 2.6 9.4 2.4 10.6C2.2 11.4 1.4 11.8 0.4 11.8C2.4 12.8 5.4 12.4 6.6 9.9Z" fill="#2b7cd3"/></g></svg>
<svg style="position:absolute;left:719px;top:91.5px;" width="17" height="17" viewBox="0 0 17 17"><path d="M0.55 2.7V15.7H15.85V2.7M4.25 2.7V15.7M12.25 2.7V15.7M0.55 6.5H15.85M0.55 12.6H15.85" fill="none" stroke="#444" stroke-width="1.05"/><rect x="4.25" y="6.5" width="8" height="6.1" fill="#7fb2e8" stroke="#2b7cd3" stroke-width="1.2"/><path d="M4.25 1.5H12.25M4.25 0.3V2.7M12.25 0.3V2.7" stroke="#2b7cd3" stroke-width="1"/></svg>
<svg style="position:absolute;left:801px;top:91px;" width="18" height="17" viewBox="0 0 18 17"><circle cx="10.2" cy="6.6" r="5.6" fill="none" stroke="#444" stroke-width="1.2"/><path d="M6.4 10.8L0.9 16.2" stroke="#444" stroke-width="1.3"/></svg>
<svg style="position:absolute;left:882px;top:167px;" width="12" height="7" viewBox="0 0 12 7"><path d="M0.8 6L5.8 1L10.8 6" fill="none" stroke="#444" stroke-width="1.3"/></svg>
<svg style="position:absolute;left:109px;top:198px;" width="9" height="5" viewBox="0 0 9 5"><path d="M0.5 0.5H8.5L4.5 4.5Z" fill="#777"/></svg>
<svg style="position:absolute;left:167px;top:196px;" width="12" height="10.5" viewBox="0 0 12 10.5"><path d="M0.8 0.8L11 9.6M11 0.8L0.8 9.6" stroke="#b9b9b9" stroke-width="1.5" fill="none"/></svg>
<svg style="position:absolute;left:202px;top:195px;" width="15" height="12.5" viewBox="0 0 15 12.5"><path d="M1.6 6.4L6 10.6L13.4 1.6" stroke="#c0c0c0" stroke-width="2.2" fill="none"/></svg>
<svg style="position:absolute;left:884px;top:196.8px;" width="8" height="6" viewBox="0 0 8 6"><path d="M0.9 1L3.7 4.2L6.5 1" stroke="#666" stroke-width="1.8" fill="none"/></svg>
<svg style="position:absolute;left:89px;top:625px;" width="15" height="13" viewBox="0 0 15 13"><path d="M5 11.6H0.65V0.7H13.6V4" fill="none" stroke="#444" stroke-width="1.2"/><path d="M0.65 2.6H13.6" stroke="#444" stroke-width="1.1"/><path d="M2 4.6H4.6M2 6.6H4.6M2 8.6H4.6" stroke="#444" stroke-width="1"/><circle cx="9.5" cy="8.4" r="3.8" fill="#f3f2f1" stroke="#444" stroke-width="1.2"/><rect x="8.2" y="7.1" width="2.6" height="2.6" fill="#444"/></svg>
<svg style="position:absolute;left:600px;top:624px;" width="13" height="13" viewBox="0 0 13 13"><path d="M0.7 0.7H12.3V12.3H0.7ZM4.55 0.7V12.3M8.45 0.7V12.3M0.7 4.55H12.3M0.7 8.45H12.3" fill="none" stroke="#444" stroke-width="1.4"/></svg>
<svg style="position:absolute;left:640px;top:624px;" width="14.2" height="13" viewBox="0 0 14.2 13"><rect x="0.65" y="0.65" width="12.9" height="11.7" fill="none" stroke="#444" stroke-width="1.3"/><rect x="3.4" y="2.9" width="7.6" height="7.2" fill="#fff" stroke="#444" stroke-width="1.1"/><path d="M5 4.8H9.4M5 6.5H9.4M5 8.2H9.4" stroke="#444" stroke-width="0.9"/></svg>
<svg style="position:absolute;left:680px;top:624px;" width="14.2" height="13" viewBox="0 0 14.2 13"><path d="M0.65 0.65H13.55V12.35H0.65ZM0.65 7.4H8.8V0.65M4.7 0.65V7.4" fill="none" stroke="#444" stroke-width="1.3"/></svg>
<span style="position:absolute;left:229.90px;top:26.014px;font-size:12.09px;line-height:16px;white-space:nowrap;color:#fff;letter-spacing:-0.236px;">Книга1&nbsp; - &nbsp;Excel</span>
<span style="position:absolute;left:397.60px;top:26.011px;font-size:12.74px;line-height:16px;white-space:nowrap;color:#185c37;letter-spacing:0.000px;">Поиск</span>
<span style="position:absolute;left:616.40px;top:26.007px;font-size:12.11px;line-height:16px;white-space:nowrap;color:#fff;letter-spacing:0.000px;">fd34 Kjufy</span>
<span style="position:absolute;left:686.90px;top:26.007px;font-size:10px;line-height:16px;white-space:nowrap;color:#fff;letter-spacing:-0.3px;">FK</span>
<span style="position:absolute;left:32.10px;top:59.007px;font-size:12.38px;line-height:16px;white-space:nowrap;color:#444;letter-spacing:-0.108px;">Файл</span>
<span style="position:absolute;left:82.60px;top:59.004px;font-size:13.02px;line-height:16px;white-space:nowrap;color:#333;font-weight:700;letter-spacing:0.033px;">Главная</span>
<span style="position:absolute;left:147.40px;top:59.007px;font-size:12.38px;line-height:16px;white-space:nowrap;color:#444;letter-spacing:-0.199px;">Вставка</span>
<span style="position:absolute;left:204.40px;top:59.000px;font-size:12.58px;line-height:16px;white-space:nowrap;color:#444;letter-spacing:0.000px;">Разметка страницы</span>
<span style="position:absolute;left:331.90px;top:59.008px;font-size:12.83px;line-height:16px;white-space:nowrap;color:#444;letter-spacing:-0.000px;">Формулы</span>
<span style="position:absolute;left:403.10px;top:59.008px;font-size:12.83px;line-height:16px;white-space:nowrap;color:#444;letter-spacing:0.000px;">Данные</span>
<span style="position:absolute;left:466.90px;top:59.013px;font-size:12.77px;line-height:16px;white-space:nowrap;color:#444;letter-spacing:0.000px;">Рецензирование</span>
<span style="position:absolute;left:581.40px;top:59.007px;font-size:12.38px;line-height:16px;white-space:nowrap;color:#444;letter-spacing:-0.440px;">Вид</span>
<span style="position:absolute;left:617.60px;top:59.004px;font-size:13.02px;line-height:16px;white-space:nowrap;color:#444;letter-spacing:0.095px;">Разработчик</span>
<span style="position:absolute;left:709.10px;top:59.007px;font-size:12.65px;line-height:16px;white-space:nowrap;color:#444;letter-spacing:0.000px;">Справка</span>
<span style="position:absolute;left:804.10px;top:59.007px;font-size:12.47px;line-height:16px;white-space:nowrap;color:#1b6a3f;font-weight:700;letter-spacing:0.000px;">Поделиться</span>
<span style="position:absolute;left:26.90px;top:122.015px;font-size:11.51px;line-height:16px;white-space:nowrap;color:#444;letter-spacing:-0.138px;">Вставить</span>
<span style="position:absolute;left:23.10px;top:161.012px;font-size:11.51px;line-height:16px;white-space:nowrap;color:#444;letter-spacing:-0.170px;">Буфер обмена</span>
<span style="position:absolute;left:174.20px;top:161.005px;font-size:11.8px;line-height:16px;white-space:nowrap;color:#444;letter-spacing:0.000px;">Шрифт</span>
<span style="position:absolute;left:308.50px;top:161.008px;font-size:11.52px;line-height:16px;white-space:nowrap;color:#444;letter-spacing:0.000px;">Выравнивание</span>
<span style="position:absolute;left:576.80px;top:161.012px;font-size:11.51px;line-height:16px;white-space:nowrap;color:#444;letter-spacing:-0.538px;">Стили</span>
<span style="position:absolute;left:442.20px;top:120.001px;font-size:12.09px;line-height:16px;white-space:nowrap;color:#444;letter-spacing:0.079px;">Число</span>
<span style="position:absolute;left:706.60px;top:120.008px;font-size:12.07px;line-height:16px;white-space:nowrap;color:#444;letter-spacing:0.000px;">Ячейки</span>
<span style="position:absolute;left:763.90px;top:120.006px;font-size:11.76px;line-height:16px;white-space:nowrap;color:#444;letter-spacing:0.000px;">Редактирование</span>
<span style="position:absolute;left:517.20px;top:88.012px;font-size:11.96px;line-height:16px;white-space:nowrap;color:#444;letter-spacing:0.000px;">Условное форматирование</span>
<span style="position:absolute;left:517.20px;top:111.005px;font-size:11.98px;line-height:16px;white-space:nowrap;color:#444;letter-spacing:0.000px;">Форматировать как таблицу</span>
<span style="position:absolute;left:517.20px;top:134.007px;font-size:11.75px;line-height:16px;white-space:nowrap;color:#444;letter-spacing:0.000px;">Стили ячеек</span>
<span style="position:absolute;left:135.30px;top:89.007px;font-size:12.03px;line-height:16px;white-space:nowrap;color:#222;letter-spacing:0.000px;">Calibri</span>
<span style="position:absolute;left:231.90px;top:89.001px;font-size:12px;line-height:16px;white-space:nowrap;color:#222;letter-spacing:-0.6px;">11</span>
<span style="position:absolute;left:135.30px;top:111.001px;font-size:14.5px;line-height:16px;white-space:nowrap;color:#222;font-weight:700;">Ж</span>
<span style="position:absolute;left:162.20px;top:111.002px;font-size:14px;line-height:16px;white-space:nowrap;color:#333;font-style:italic;">К</span>
<span style="position:absolute;left:186.10px;top:111.002px;font-size:14px;line-height:16px;white-space:nowrap;color:#333;">Ч</span>
<span style="position:absolute;left:229.80px;top:111.010px;font-size:17px;line-height:16px;white-space:nowrap;color:#444;">A</span>
<span style="position:absolute;left:255.30px;top:111.002px;font-size:14px;line-height:16px;white-space:nowrap;color:#444;">A</span>
<span style="position:absolute;left:452.00px;top:92.012px;font-size:18.5px;line-height:16px;white-space:nowrap;color:#444;">%</span>
<span style="position:absolute;left:28.80px;top:193.004px;font-size:12.67px;line-height:16px;white-space:nowrap;color:#444;letter-spacing:-0.181px;">C12</span>
<span style="position:absolute;left:239.80px;top:191.004px;font-size:14.5px;line-height:16px;white-space:nowrap;color:#5e5e5e;font-weight:700;font-style:italic;font-family:'Liberation Serif',serif;">f</span>
<span style="position:absolute;left:245.40px;top:194.015px;font-size:10.5px;line-height:16px;white-space:nowrap;color:#5e5e5e;font-weight:700;font-style:italic;font-family:'Liberation Serif',serif;">x</span>
<span style="position:absolute;left:80.70px;top:226.013px;font-size:13.5px;line-height:16px;white-space:nowrap;color:#1c1c1c;transform:translateX(-50%);">A</span>
<span style="position:absolute;left:167.20px;top:226.013px;font-size:13.5px;line-height:16px;white-space:nowrap;color:#1c1c1c;transform:translateX(-50%);">B</span>
<span style="position:absolute;left:247.70px;top:226.013px;font-size:13.5px;line-height:16px;white-space:nowrap;color:#217346;transform:translateX(-50%);">C</span>
<span style="position:absolute;left:311.70px;top:226.013px;font-size:13.5px;line-height:16px;white-space:nowrap;color:#1c1c1c;transform:translateX(-50%);">D</span>
<span style="position:absolute;left:375.70px;top:226.013px;font-size:13.5px;line-height:16px;white-space:nowrap;color:#1c1c1c;transform:translateX(-50%);">E</span>
<span style="position:absolute;left:439.70px;top:226.013px;font-size:13.5px;line-height:16px;white-space:nowrap;color:#1c1c1c;transform:translateX(-50%);">F</span>
<span style="position:absolute;left:503.70px;top:226.013px;font-size:13.5px;line-height:16px;white-space:nowrap;color:#1c1c1c;transform:translateX(-50%);">G</span>
<span style="position:absolute;left:567.70px;top:226.013px;font-size:13.5px;line-height:16px;white-space:nowrap;color:#1c1c1c;transform:translateX(-50%);">H</span>
<span style="position:absolute;left:631.70px;top:226.013px;font-size:13.5px;line-height:16px;white-space:nowrap;color:#1c1c1c;transform:translateX(-50%);">I</span>
<span style="position:absolute;left:695.70px;top:226.013px;font-size:13.5px;line-height:16px;white-space:nowrap;color:#1c1c1c;transform:translateX(-50%);">J</span>
<span style="position:absolute;left:759.70px;top:226.013px;font-size:13.5px;line-height:16px;white-space:nowrap;color:#1c1c1c;transform:translateX(-50%);">K</span>
<span style="position:absolute;left:823.70px;top:226.013px;font-size:13.5px;line-height:16px;white-space:nowrap;color:#1c1c1c;transform:translateX(-50%);">L</span>
<span style="position:absolute;left:29.60px;top:247.010px;font-size:13.5px;line-height:16px;white-space:nowrap;color:#1c1c1c;transform:translateX(-50%);letter-spacing:-0.5px;">1</span>
<span style="position:absolute;left:29.60px;top:267.010px;font-size:13.5px;line-height:16px;white-space:nowrap;color:#1c1c1c;transform:translateX(-50%);letter-spacing:-0.5px;">2</span>
<span style="position:absolute;left:29.60px;top:287.010px;font-size:13.5px;line-height:16px;white-space:nowrap;color:#1c1c1c;transform:translateX(-50%);letter-spacing:-0.5px;">3</span>
<span style="position:absolute;left:29.60px;top:307.010px;font-size:13.5px;line-height:16px;white-space:nowrap;color:#1c1c1c;transform:translateX(-50%);letter-spacing:-0.5px;">4</span>
<span style="position:absolute;left:29.60px;top:327.010px;font-size:13.5px;line-height:16px;white-space:nowrap;color:#1c1c1c;transform:translateX(-50%);letter-spacing:-0.5px;">5</span>
<span style="position:absolute;left:29.60px;top:347.010px;font-size:13.5px;line-height:16px;white-space:nowrap;color:#1c1c1c;transform:translateX(-50%);letter-spacing:-0.5px;">6</span>
<span style="position:absolute;left:29.60px;top:367.010px;font-size:13.5px;line-height:16px;white-space:nowrap;color:#1c1c1c;transform:translateX(-50%);letter-spacing:-0.5px;">7</span>
<span style="position:absolute;left:29.60px;top:387.010px;font-size:13.5px;line-height:16px;white-space:nowrap;color:#1c1c1c;transform:translateX(-50%);letter-spacing:-0.5px;">8</span>
<span style="position:absolute;left:29.60px;top:407.010px;font-size:13.5px;line-height:16px;white-space:nowrap;color:#1c1c1c;transform:translateX(-50%);letter-spacing:-0.5px;">9</span>
<span style="position:absolute;left:29.60px;top:427.010px;font-size:13.5px;line-height:16px;white-space:nowrap;color:#1c1c1c;transform:translateX(-50%);letter-spacing:-0.5px;">10</span>
<span style="position:absolute;left:29.60px;top:447.010px;font-size:13.5px;line-height:16px;white-space:nowrap;color:#1c1c1c;transform:translateX(-50%);letter-spacing:-0.5px;">11</span>
<span style="position:absolute;left:29.60px;top:467.010px;font-size:13.5px;line-height:16px;white-space:nowrap;color:#217346;transform:translateX(-50%);letter-spacing:-0.5px;">12</span>
<span style="position:absolute;left:29.60px;top:487.010px;font-size:13.5px;line-height:16px;white-space:nowrap;color:#1c1c1c;transform:translateX(-50%);letter-spacing:-0.5px;">13</span>
<span style="position:absolute;left:29.60px;top:507.010px;font-size:13.5px;line-height:16px;white-space:nowrap;color:#1c1c1c;transform:translateX(-50%);letter-spacing:-0.5px;">14</span>
<span style="position:absolute;left:29.60px;top:527.010px;font-size:13.5px;line-height:16px;white-space:nowrap;color:#1c1c1c;transform:translateX(-50%);letter-spacing:-0.5px;">15</span>
<span style="position:absolute;left:29.60px;top:547.010px;font-size:13.5px;line-height:16px;white-space:nowrap;color:#1c1c1c;transform:translateX(-50%);letter-spacing:-0.5px;">16</span>
<span style="position:absolute;left:29.60px;top:567.010px;font-size:13.5px;line-height:16px;white-space:nowrap;color:#1c1c1c;transform:translateX(-50%);letter-spacing:-0.5px;">17</span>
<span style="position:absolute;left:29.60px;top:587.010px;font-size:13.5px;line-height:16px;white-space:nowrap;color:#333;transform:translateX(-50%);clip-path:inset(0 0 10.6px 0);">18</span>
<span style="position:absolute;left:80.10px;top:247.010px;font-size:13.5px;line-height:16px;white-space:nowrap;color:#000;transform:translateX(-50%);">Я</span>
<span style="position:absolute;left:152.60px;top:247.003px;font-size:13.16px;line-height:16px;white-space:nowrap;color:#000;letter-spacing:-0.358px;">Явка</span>
<span style="position:absolute;left:80.10px;top:267.010px;font-size:13.5px;line-height:16px;white-space:nowrap;color:#000;transform:translateX(-50%);">В</span>
<span style="position:absolute;left:134.60px;top:266.001px;font-size:13.84px;line-height:16px;white-space:nowrap;color:#000;letter-spacing:0.117px;">Выходной</span>
<span style="position:absolute;left:80.10px;top:287.010px;font-size:13.5px;line-height:16px;white-space:nowrap;color:#000;transform:translateX(-50%);">Б</span>
<span style="position:absolute;left:126.60px;top:286.001px;font-size:13.84px;line-height:16px;white-space:nowrap;color:#000;letter-spacing:0.126px;">Больничный</span>
<span style="position:absolute;left:80.10px;top:307.010px;font-size:13.5px;line-height:16px;white-space:nowrap;color:#000;transform:translateX(-50%);">О</span>
<span style="position:absolute;left:144.60px;top:306.001px;font-size:13.84px;line-height:16px;white-space:nowrap;color:#000;letter-spacing:0.194px;">Отпуск</span>
<span style="position:absolute;left:80.10px;top:327.010px;font-size:13.5px;line-height:16px;white-space:nowrap;color:#000;transform:translateX(-50%);">П</span>
<span style="position:absolute;left:144.60px;top:326.001px;font-size:13.84px;line-height:16px;white-space:nowrap;color:#000;letter-spacing:0.043px;">Прогул</span>
<span style="position:absolute;left:80.10px;top:347.010px;font-size:13.5px;line-height:16px;white-space:nowrap;color:#000;transform:translateX(-50%);">К</span>
<span style="position:absolute;left:120.10px;top:346.001px;font-size:13.84px;line-height:16px;white-space:nowrap;color:#000;letter-spacing:0.054px;">Командировка</span>
<span style="position:absolute;left:129.40px;top:598.010px;font-size:12.2px;line-height:16px;white-space:nowrap;color:#444;letter-spacing:0.000px;">Лист1</span>
<span style="position:absolute;left:188.90px;top:598.000px;font-size:13.04px;line-height:16px;white-space:nowrap;color:#217346;font-weight:700;letter-spacing:0.000px;">Справочники</span>
<span style="position:absolute;left:25.10px;top:624.003px;font-size:11.76px;line-height:16px;white-space:nowrap;color:#444;letter-spacing:0.000px;">Готово</span>
<span style="position:absolute;left:852.40px;top:624.010px;font-size:11.02px;line-height:16px;white-space:nowrap;color:#444;letter-spacing:-0.311px;">100 %</span>
<span style="position:absolute;left:223.00px;top:133.008px;font-size:14.3px;line-height:16px;white-space:nowrap;color:#444;">A</span>
<span style="position:absolute;left:365.80px;top:84.002px;font-size:10.5px;line-height:16px;white-space:nowrap;color:#444;">ab</span>
<span style="position:absolute;left:365.90px;top:91.005px;font-size:10.5px;line-height:16px;white-space:nowrap;color:#444;">c</span>
<span style="position:absolute;left:397.40px;top:135.010px;font-size:11px;line-height:16px;white-space:nowrap;color:#444;">¶</span>
</div>
<div id="over">
<svg width="918" height="659" viewBox="0 0 918 659" style="position:absolute;left:0;top:0">
<defs><filter id="ds" x="-20%" y="-20%" width="150%" height="150%"><feDropShadow dx="2.5" dy="2.5" stdDeviation="2" flood-color="#000" flood-opacity="0.45"/></filter></defs>
<g filter="url(#ds)" fill="none" stroke="#f40000" stroke-linecap="round" stroke-linejoin="round">
<rect x="177.7" y="585.8" width="113.3" height="37.7" rx="8" ry="8" stroke-width="4.2"/>
<path d="M226.7 584L168.6 384" stroke-width="4.4"/>
<path d="M166.3 396L168.2 383.5L177.2 391.5" stroke-width="4.4"/>
</g></svg>
</div>
</body></html>
